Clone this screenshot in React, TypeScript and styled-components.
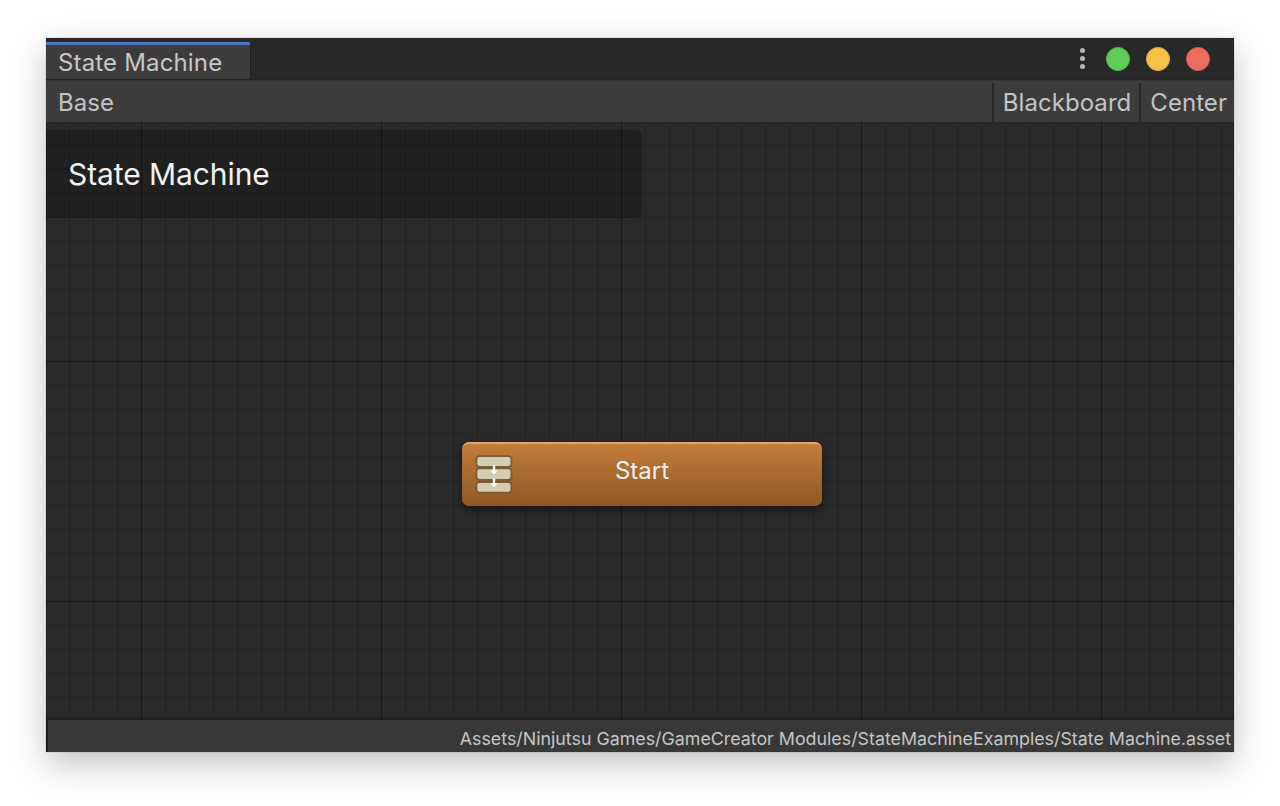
import React from "react";
import styled, { createGlobalStyle } from "styled-components";

const GlobalStyle = createGlobalStyle`
  html, body {
    margin: 0;
    padding: 0;
    background: #ffffff;
    font-family: "Inter", "Liberation Sans", sans-serif;
  }
`;

const Page = styled.div`
  width: 1280px;
  height: 806px;
  padding: 38px 46px 54px;
  box-sizing: border-box;
  overflow: hidden;
`;

const Window = styled.div`
  height: 714px;
  display: flex;
  flex-direction: column;
  background: #1f1f1f;
  box-shadow: 0 12px 32px rgba(0, 0, 0, 0.24), 0 0 1px rgba(0, 0, 0, 0.4);
`;

const TabBar = styled.div`
  height: 42px;
  flex: none;
  display: flex;
  justify-content: space-between;
  background: #282828;
  border-bottom: 1px solid #232323;
  box-sizing: border-box;
`;

const Tab = styled.div`
  width: 205px;
  margin-top: 4px;
  padding-left: 12px;
  box-sizing: border-box;
  background: #3c3c3c;
  border-top: 3px solid #4a78bd;
  border-right: 1px solid #1f1f1f;
  border-top-right-radius: 3px;
  color: #c8c8c8;
  font-size: 24px;
  letter-spacing: 0.16px;
  line-height: 35px;
`;

const WindowControls = styled.div`
  display: flex;
  align-items: center;
  gap: 16px;
  padding-right: 24px;
`;

const Kebab = styled.div`
  display: flex;
  flex-direction: column;
  gap: 3px;
  margin-right: 5px;

  span {
    width: 5px;
    height: 5px;
    border-radius: 50%;
    background: #b8b8b8;
  }
`;

const Light = styled.div<{ $color: string; $edge: string }>`
  width: 24px;
  height: 24px;
  box-sizing: border-box;
  border-radius: 50%;
  background: ${(p) => p.$color};
  border: 1px solid ${(p) => p.$edge};
`;

const Toolbar = styled.div`
  height: 42px;
  flex: none;
  display: flex;
  background: #3c3c3c;
  border-top: 1px solid #363636;
  box-sizing: border-box;
  color: #c4c4c4;
  font-size: 24px;
  letter-spacing: 0.05px;
  line-height: 43px;
`;

const Breadcrumb = styled.div`
  flex: 1;
  padding-left: 12px;
`;

const ToolButton = styled.div`
  padding: 0 8px 0 9px;
  border-left: 2px solid #282828;
  margin-top: 2px;
  line-height: 39px;

  &:last-child {
    padding-right: 7px;
  }
`;

const Canvas = styled.div`
  position: relative;
  flex: 1;
  background-color: #2a2a2a;
  background-image:
    linear-gradient(to right, #171717 1px, transparent 1px),
    linear-gradient(to bottom, #171717 1px, transparent 1px),
    linear-gradient(to right, #222222 1px, transparent 1px),
    linear-gradient(to bottom, #222222 1px, transparent 1px);
  background-size: 240px 240px, 240px 240px, 24px 24px, 24px 24px;
  background-position: 95px 0, 0 239px, 23px 0, 0 23px;
  box-shadow: inset 0 0 5px rgba(0, 0, 0, 0.2);
`;

const TitlePanel = styled.div`
  position: absolute;
  left: 0;
  top: 8px;
  width: 596px;
  height: 88px;
  padding-left: 22px;
  box-sizing: border-box;
  display: flex;
  align-items: center;
  background: rgba(10, 10, 10, 0.3);
  border-radius: 0 6px 6px 0;
  color: #f2f2f2;
  font-size: 30px;
  letter-spacing: -0.08px;
`;

const StartNode = styled.div`
  position: absolute;
  left: 416px;
  top: 320px;
  width: 360px;
  height: 64px;
  padding-bottom: 10px;
  box-sizing: border-box;
  display: flex;
  align-items: center;
  justify-content: center;
  border-radius: 7px;
  border-top: 2px solid #dca673;
  background: linear-gradient(to bottom, #c27c3a, #8f5823);
  box-shadow: 0 3px 8px rgba(0, 0, 0, 0.55);
  color: #f0f0f0;
  font-size: 24px;
`;

const NodeIcon = styled.svg`
  position: absolute;
  left: 13px;
  top: 11px;
`;

const StatusBar = styled.div`
  height: 32px;
  flex: none;
  margin: 2px 0 0 2px;
  padding-right: 3px;
  background: #383838;
  color: #c6c6c6;
  font-size: 17.82px;
  line-height: 38px;
  text-align: right;
  white-space: nowrap;
  overflow: hidden;
`;

const App: React.FC = () => {
  return (
    <Page>
      <GlobalStyle />
      <Window>
        <TabBar>
          <Tab>State Machine</Tab>
          <WindowControls>
            <Kebab>
              <span />
              <span />
              <span />
            </Kebab>
            <Light $color="#5fcc58" $edge="#52b54c" />
            <Light $color="#f6c144" $edge="#dfae3b" />
            <Light $color="#ee6b60" $edge="#d65d53" />
          </WindowControls>
        </TabBar>
        <Toolbar>
          <Breadcrumb>Base</Breadcrumb>
          <ToolButton>Blackboard</ToolButton>
          <ToolButton>Center</ToolButton>
        </Toolbar>
        <Canvas>
          <TitlePanel>State Machine</TitlePanel>
          <StartNode>
            <NodeIcon width="38" height="39" viewBox="0 0 38 39">
              <g fill="#d3cdb3" stroke="#6f5434" strokeWidth="1.8" strokeOpacity="0.9">
                <rect x="1.4" y="1.2" width="35" height="10.6" rx="3" />
                <rect x="1.4" y="13.4" width="35" height="11.4" rx="3" />
                <rect x="1.4" y="27" width="35" height="10.6" rx="3" />
              </g>
              <path d="M19 10.5v7M19 23.5v6" stroke="#ffffff" strokeWidth="2.4" fill="none" />
              <path d="M15.5 15.5h7l-3.5 4zM15.5 28.5h7l-3.5 4z" fill="#ffffff" />
            </NodeIcon>
            Start
          </StartNode>
        </Canvas>
        <StatusBar>Assets/Ninjutsu Games/GameCreator Modules/StateMachineExamples/State Machine.asset</StatusBar>
      </Window>
    </Page>
  );
};

export default App;
